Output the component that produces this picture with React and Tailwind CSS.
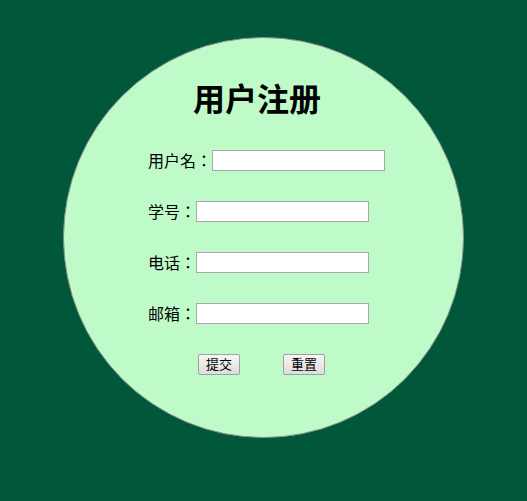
export default function App() {
  const fields = [
    { label: '用户名：', id: 'username' },
    { label: '学号：', id: 'sid' },
    { label: '电话：', id: 'phone' },
    { label: '邮箱：', id: 'email' },
  ];

  return (
    <div
      className="w-[527px] h-[501px] bg-[#00573a] pt-[37px] pl-[63px]"
      style={{ fontFamily: '"Liberation Sans", "Noto Sans CJK SC", sans-serif' }}
    >
      <div className="w-[401px] h-[401px] rounded-full bg-[#bffbc9] border border-[#8a8a8a] pt-[42px]">
        <h1 className="text-[32px] leading-[40px] font-bold text-black pl-[129px]">用户注册</h1>

        <form className="flex flex-col gap-[30px] pl-[84px] mt-[30px]">
          {fields.map(f => (
            <div key={f.id} className="flex items-center h-[21px]">
              <label
                htmlFor={f.id}
                className="text-[16px] leading-[21px] text-black"
                style={{ fontFamily: '"Noto Sans CJK TC", "Noto Sans CJK SC", sans-serif' }}
              >
                {f.label}
              </label>
              <input
                id={f.id}
                type="text"
                className="w-[173px] h-[21px] bg-white border border-[#a9a9a9] outline-none"
              />
            </div>
          ))}

          <div className="flex pl-[50px] gap-[43px]">
            <button
              type="button"
              className="w-[42px] h-[21px] text-[13px] leading-[19px] text-black border border-[#a0a0a0] rounded-[2px] bg-gradient-to-b from-[#f6f6f6] to-[#dddddd]"
            >
              提交
            </button>
            <button
              type="reset"
              className="w-[42px] h-[21px] text-[13px] leading-[19px] text-black border border-[#a0a0a0] rounded-[2px] bg-gradient-to-b from-[#f6f6f6] to-[#dddddd]"
            >
              重置
            </button>
          </div>
        </form>
      </div>
    </div>
  );
}
